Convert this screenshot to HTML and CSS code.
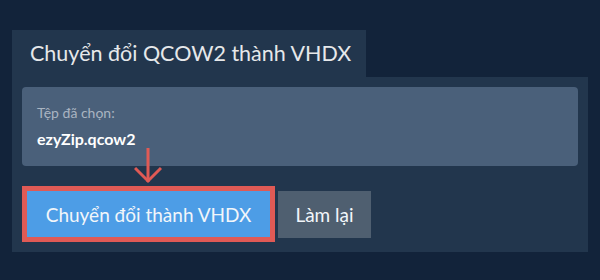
FILE: index.html
```html
<!DOCTYPE html>
<html>

<head>
    <title>Chuyển đổi QCOW2 thành VHDX</title>
    <link rel="stylesheet" href="styles.css">
</head>

<body>
    <div class="converter">
        <div class="tab">Chuyển đổi QCOW2 thành VHDX</div>

        <div class="panel">
            <div class="file-box">
                <div class="file-label">Tệp đã chọn:</div>
                <div class="file-name">ezyZip.qcow2</div>
            </div>

            <!-- annotation arrow pointing at the convert button -->
            <svg class="hint-arrow" width="28" height="36" viewBox="0 0 28 36">
                <line x1="14" y1="0" x2="14" y2="34" stroke="#e05a55" stroke-width="3" />
                <polyline points="1,20 14,33 27,20" fill="none" stroke="#e05a55" stroke-width="3" />
            </svg>

            <div class="actions">
                <div class="highlight">
                    <button class="btn btn-convert">Chuyển đổi thành VHDX</button>
                </div>
                <button class="btn btn-reset">Làm lại</button>
            </div>
        </div>
    </div>
</body>

</html>
```

FILE: styles.css
```css
/* ezyZip style converter card */
body {
    background-color: #12233a;
    font-family: Lato, "Noto Sans", sans-serif;
    margin: 0;
    padding: 30px 12px 0 12px;
}

.tab {
    display: inline-block;
    background-color: #22364d;
    color: #e6e8ea;
    font-size: 21.5px;
    height: 47px;
    line-height: 46px;
    padding: 0 18px;
    box-sizing: border-box;
    width: 354px;
    white-space: nowrap;
}

.panel {
    position: relative;
    background-color: #22364d;
    width: 576px;
    padding: 10px;
    box-sizing: border-box;
}

.file-box {
    background-color: #4a607a;
    border-radius: 4px;
    padding: 17px 15px 0 15px;
    height: 79px;
    box-sizing: border-box;
}

.file-label {
    color: #a9b4c1;
    font-size: 14px;
}

.file-name {
    color: #ffffff;
    font-size: 16px;
    font-weight: bold;
    margin-top: 8px;
}

.hint-arrow {
    position: absolute;
    left: 122px;
    top: 71px;
}

.actions {
    display: flex;
    align-items: center;
    margin-top: 20px;
}

.highlight {
    border: 5px solid #e05a55;
    display: flex;
}

.btn {
    border: none;
    font-family: Lato, "Noto Sans", sans-serif;
    font-size: 19px;
    color: #f2f6fa;
    cursor: pointer;
    outline: none;
    white-space: nowrap;
}

.btn-convert {
    background-color: #4d9de6;
    width: 243px;
    height: 46px;
    padding: 0;
}

.btn-reset {
    background-color: #4f5f70;
    width: 93px;
    height: 47px;
    padding: 0;
    margin-left: 3px;
}
```
